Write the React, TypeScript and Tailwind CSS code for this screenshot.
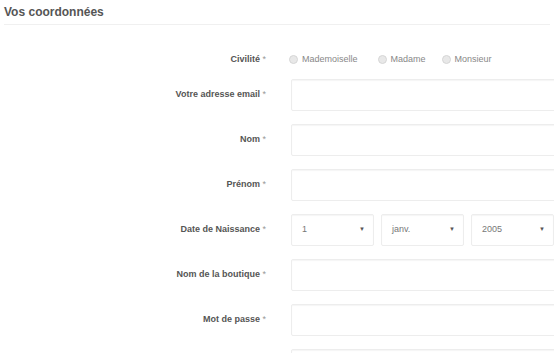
const font = { fontFamily: '"Liberation Sans", Arial, sans-serif' };

function Label({ text }: { text: string }) {
  return (
    <div className="w-[270px] shrink-0 pr-[4px] text-right text-[9px] font-bold text-[#555]">
      {text && (
        <>
          {text} <span className="font-normal text-[#999]">*</span>
        </>
      )}
    </div>
  );
}

function TextRow({ label }: { label: string }) {
  return (
    <div className="flex items-center">
      <Label text={label} />
      <div className="ml-[21px] h-[32px] w-[270px] shrink-0 rounded-[2px] border border-[#ededed] bg-white shadow-[inset_0_1px_1px_rgba(0,0,0,0.04)]" />
    </div>
  );
}

function Select({ value }: { value: string }) {
  return (
    <div className="flex h-[32px] w-[83px] shrink-0 items-center justify-between rounded-[2px] border border-[#ededed] bg-white pl-[10px] pr-[8px] text-[9px] text-[#777] shadow-[inset_0_1px_1px_rgba(0,0,0,0.04)]">
      <span>{value}</span>
      <span className="text-[6px] text-[#555]">▼</span>
    </div>
  );
}

function Radio({ label }: { label: string }) {
  return (
    <div className="flex items-center gap-[4px] text-[9px] text-[#888]">
      <span className="h-[9px] w-[9px] rounded-full border border-[#d6d6d6] bg-[#e8e8e8]" />
      <span>{label}</span>
    </div>
  );
}

export default function App() {
  return (
    <div className="h-[353px] w-[554px] overflow-hidden bg-white" style={font}>
      <div className="mx-[4px] border-b border-[#f0f0f0] pb-[3px] pt-[3px] text-[12px] font-bold text-[#555]">
        Vos coordonnées
      </div>
      <div className="mt-[28px] flex items-center">
        <Label text="Civilité" />
        <div className="ml-[19px] flex items-center">
          <Radio label="Mademoiselle" />
          <div className="ml-[20px]">
            <Radio label="Madame" />
          </div>
          <div className="ml-[16px]">
            <Radio label="Monsieur" />
          </div>
        </div>
      </div>
      <div className="mt-[12px] flex flex-col gap-[13px]">
        <TextRow label="Votre adresse email" />
        <TextRow label="Nom" />
        <TextRow label="Prénom" />
        <div className="flex items-center">
          <Label text="Date de Naissance" />
          <div className="ml-[21px] flex gap-[7px]">
            <Select value="1" />
            <Select value="janv." />
            <Select value="2005" />
          </div>
        </div>
        <TextRow label="Nom de la boutique" />
        <TextRow label="Mot de passe" />
        <TextRow label="" />
      </div>
    </div>
  );
}
